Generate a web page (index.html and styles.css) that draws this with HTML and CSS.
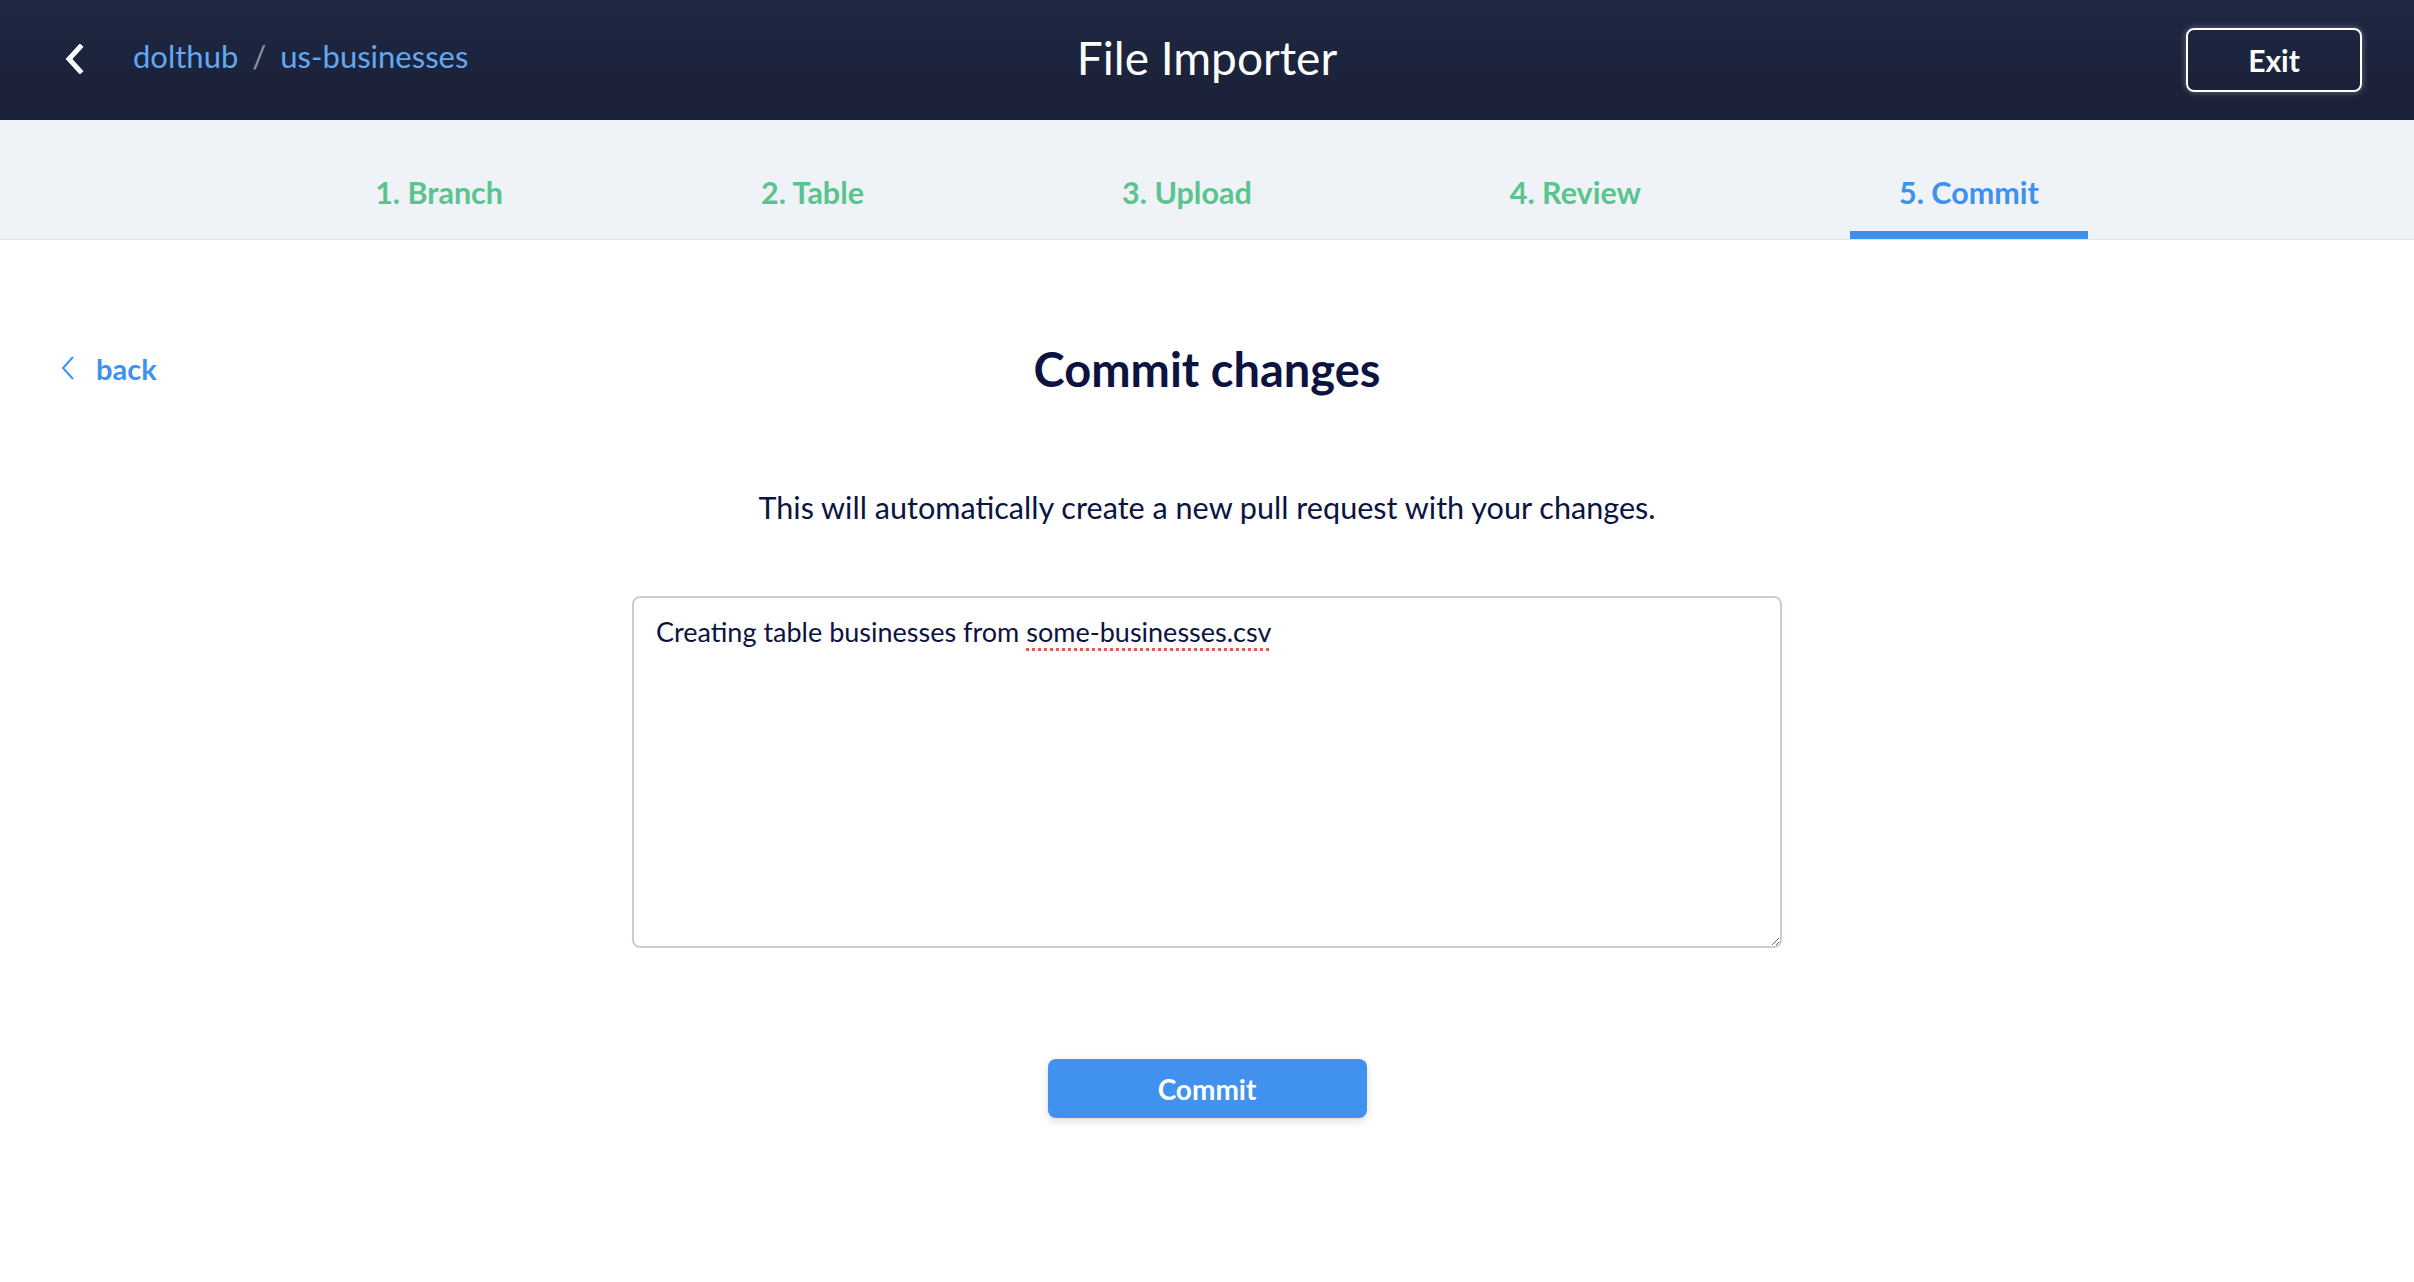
FILE: index.html
```html
<!DOCTYPE html>
<html lang="en">
<head>
<meta charset="utf-8">
<title>File Importer</title>
<link rel="stylesheet" href="styles.css">
</head>
<body>
<header class="topbar">
  <div class="crumbs">
    <a class="back-arrow" href="#" aria-label="Back">
      <svg width="22" height="30" viewBox="0 0 22 30"><path d="M17 3 L6 15 L17 27" fill="none" stroke="#ffffff" stroke-width="5" stroke-linecap="square" stroke-linejoin="miter"/></svg>
    </a>
    <a class="crumb" href="#">dolthub</a>
    <span class="sep">/</span>
    <a class="crumb" href="#">us-businesses</a>
  </div>
  <h1 class="title">File Importer</h1>
  <div class="actions">
    <button class="exit">Exit</button>
  </div>
</header>
<nav class="steps">
  <a class="step done" href="#">1. Branch</a>
  <a class="step done" href="#">2. Table</a>
  <a class="step done" href="#">3. Upload</a>
  <a class="step done" href="#">4. Review</a>
  <a class="step active" href="#">5. Commit</a>
</nav>
<main class="content">
  <div class="heading-row">
    <a class="back-link" href="#">
      <svg width="16" height="26" viewBox="0 0 16 26"><path d="M13 2 L3 13 L13 24" fill="none" stroke="#3f91ee" stroke-width="2"/></svg>
      <span>back</span>
    </a>
    <h2 class="heading">Commit changes</h2>
    <div></div>
  </div>
  <p class="desc">This will automatically create a new pull request with your changes.</p>
  <div class="message" role="textbox" aria-multiline="true" contenteditable="true" spellcheck="false">Creating table businesses from <span class="misspelled">some-businesses.csv</span></div>
  <button class="commit">Commit</button>
</main>
</body>
</html>
```

FILE: styles.css
```css
* { box-sizing: border-box; }
html, body { margin: 0; padding: 0; }
body {
  font-family: Lato, "Open Sans", sans-serif;
  background: #ffffff;
  color: #0d1341;
  width: 2414px;
  min-height: 1282px;
}
a { text-decoration: none; }

.topbar {
  height: 120px;
  display: grid;
  grid-template-columns: 1fr auto 1fr;
  align-items: center;
  padding: 0 52px;
  background: linear-gradient(#1f2743, #1a2036);
}
.crumbs {
  display: flex;
  align-items: center;
  font-size: 31px;
  padding-bottom: 8px;
  margin-left: 11px;
}
.back-arrow { display: flex; margin-right: 48px; padding-top: 6px; }
.crumb { color: #62a8f3; }
.sep { color: #8b93a5; margin: 0 14px; }
.title {
  margin: 0;
  padding-bottom: 6px;
  font-size: 46px;
  font-weight: 400;
  color: #ffffff;
}
.actions { display: flex; justify-content: flex-end; }
.exit {
  width: 176px;
  height: 64px;
  border: 2px solid #ffffff;
  border-radius: 8px;
  background: transparent;
  color: #ffffff;
  font-family: inherit;
  font-size: 30px;
  font-weight: 700;
  box-shadow: 0 0 6px rgba(255,255,255,0.35);
}

.steps {
  height: 120px;
  display: flex;
  justify-content: center;
  gap: 160px;
  background: #eff2f7;
  border-bottom: 1px solid #e1e5ec;
}
.step {
  display: flex;
  align-items: center;
  height: 119px;
  padding: 32px 49px 0;
  border-bottom: 8px solid transparent;
  font-size: 30.5px;
  font-weight: 700;
}
.step.done { color: #5ac48f; }
.step.active { color: #3f91ee; border-bottom-color: #3f91ee; }

.content {
  display: flex;
  flex-direction: column;
  align-items: center;
  padding-top: 100px;
}
.heading-row {
  width: 100%;
  display: grid;
  grid-template-columns: 1fr auto 1fr;
  align-items: center;
  padding: 0 60px;
}
.back-link {
  display: flex;
  align-items: center;
  gap: 20px;
  color: #3f91ee;
  font-size: 29px;
  font-weight: 700;
  padding-bottom: 2px;
}
.heading {
  margin: 0;
  font-size: 47px;
  line-height: 58px;
  font-weight: 700;
  color: #0d1341;
}
.desc {
  margin: 90px 0 0;
  font-size: 30.6px;
  line-height: 40px;
}
.message {
  margin-top: 68px;
  width: 1150px;
  height: 352px;
  border: 2px solid #c9ced5;
  border-radius: 8px;
  padding: 16px 22px;
  font-size: 27px;
  line-height: 36px;
  color: #0d1341;
  resize: both;
  overflow: auto;
  outline: none;
}
.misspelled {
  text-decoration: underline dotted #ef5a50;
  text-decoration-thickness: 3px;
  text-underline-offset: 6px;
}
.commit {
  margin-top: 111px;
  width: 319px;
  height: 59px;
  border: none;
  border-radius: 8px;
  background: #4192ef;
  color: #ffffff;
  font-family: inherit;
  font-size: 28px;
  font-weight: 700;
  box-shadow: 0 3px 8px rgba(40,60,90,0.18);
}
```
